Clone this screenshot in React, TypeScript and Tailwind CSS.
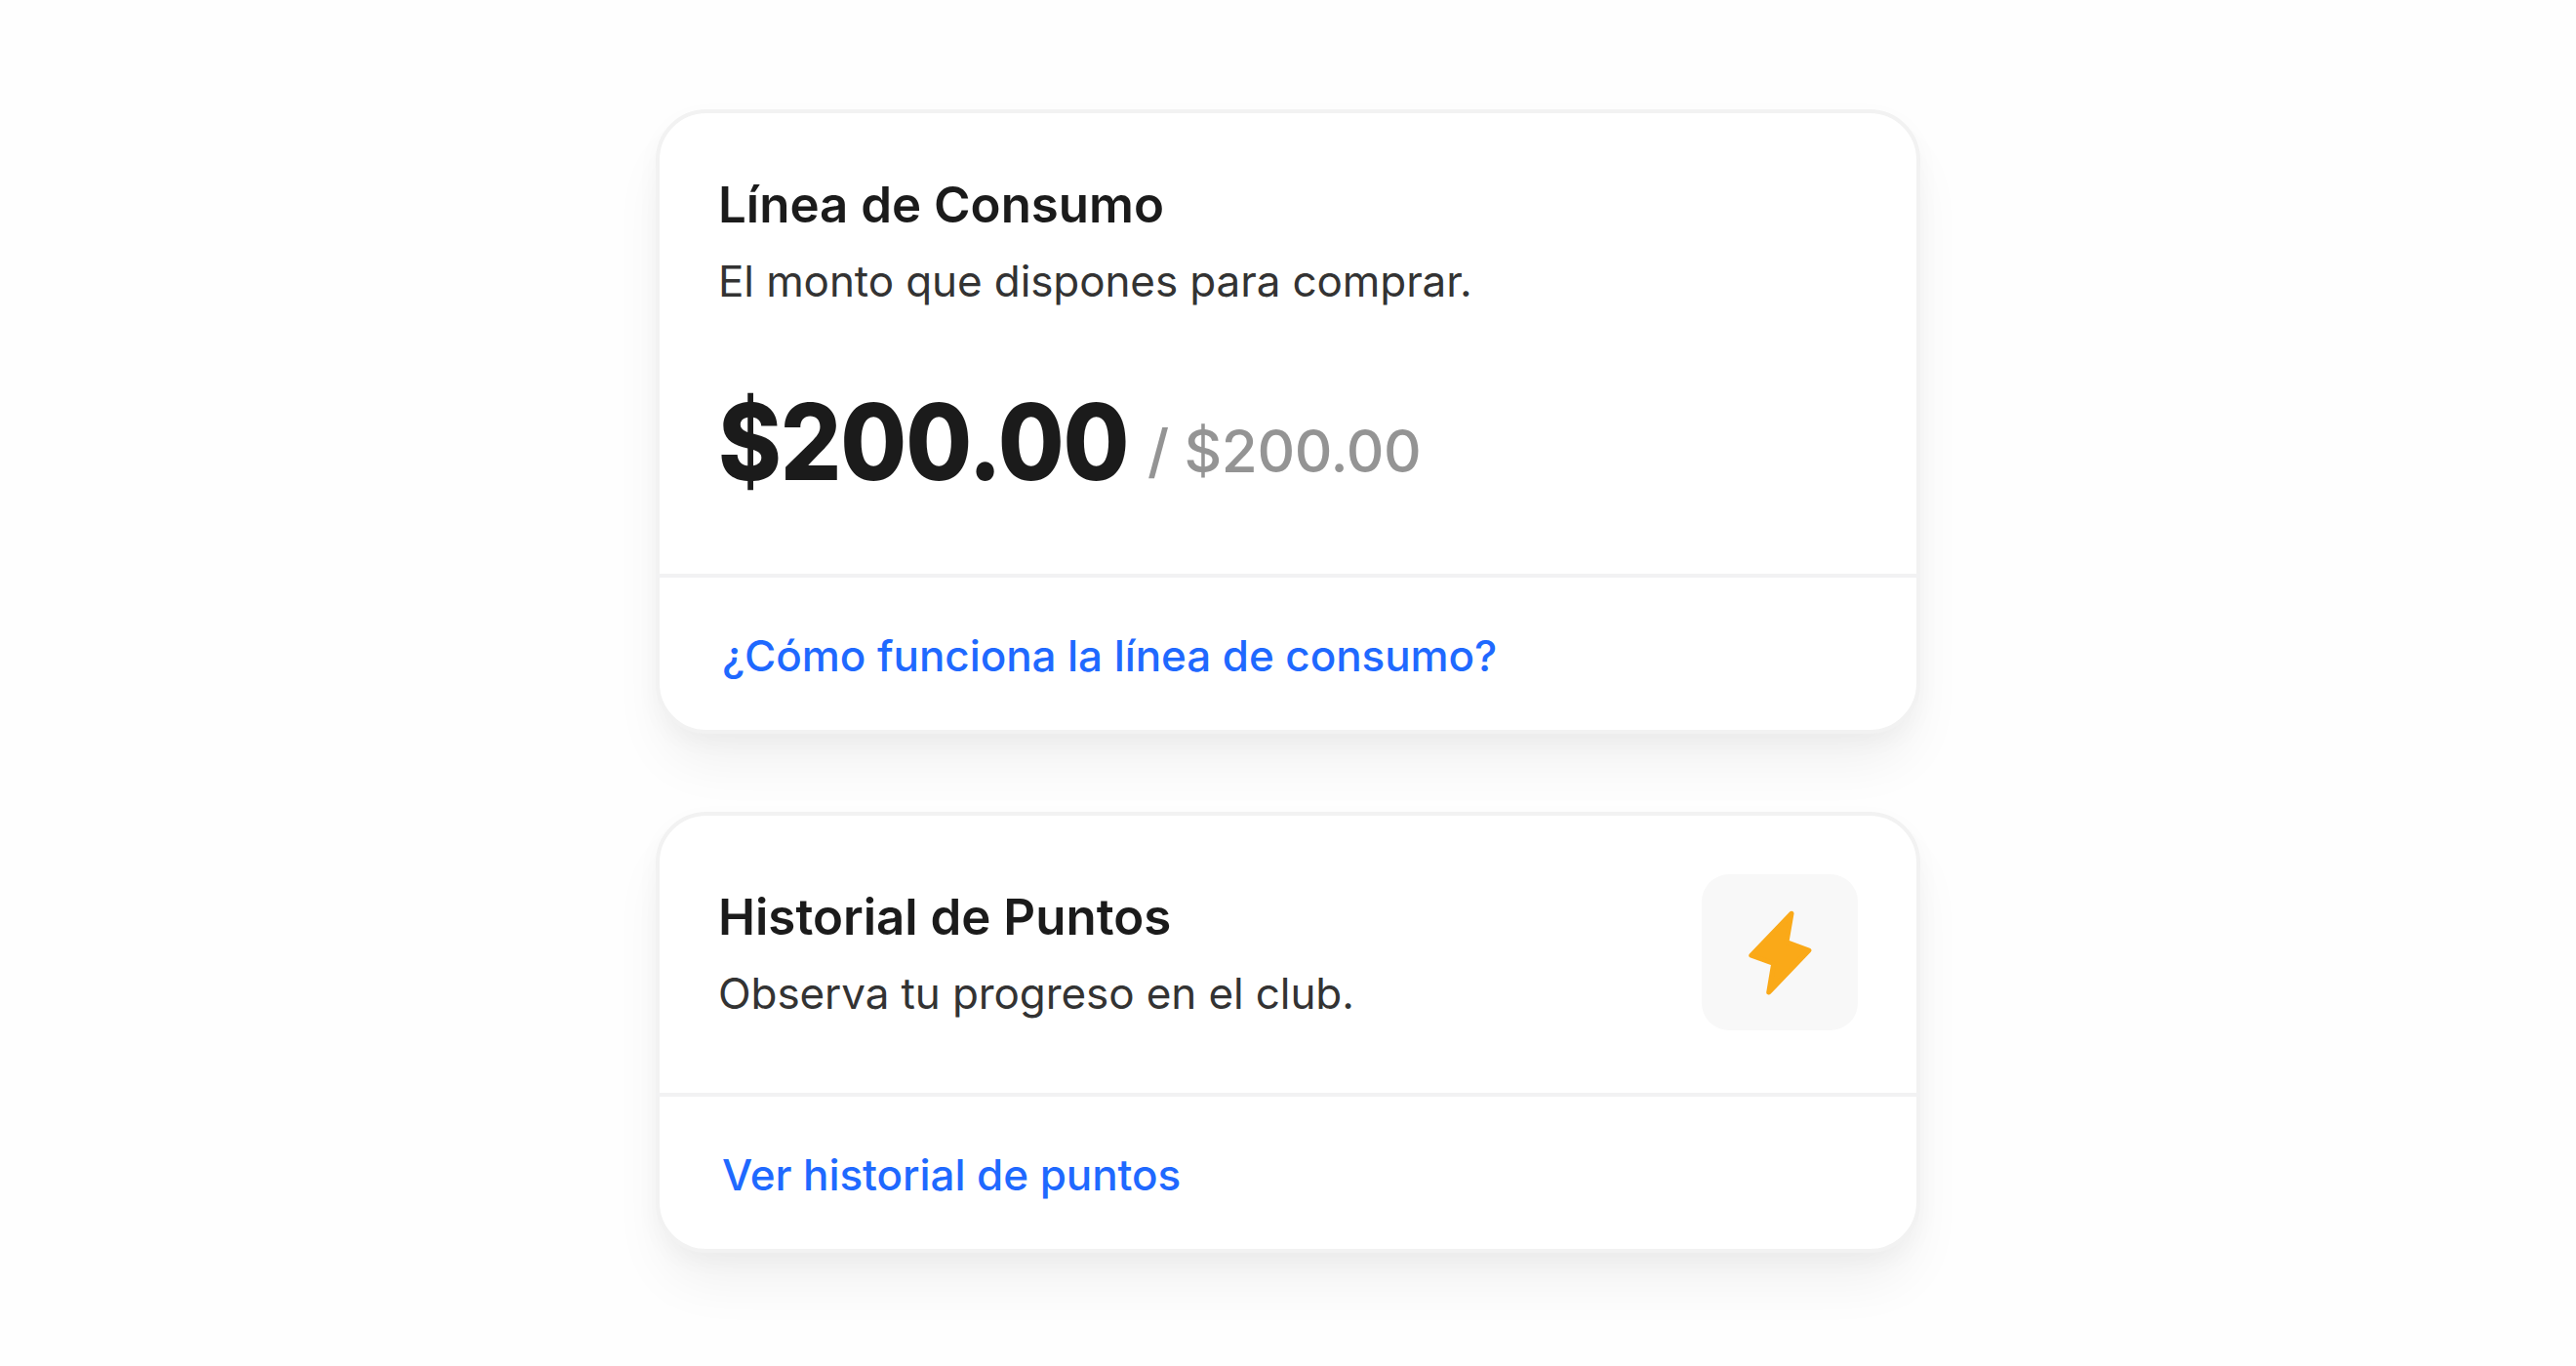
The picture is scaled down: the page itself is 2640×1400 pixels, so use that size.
import type { ReactNode } from "react";

function BoltIcon() {
  return (
    <svg width="65" height="87" viewBox="0 0 65 87" fill="#faa918" stroke="#faa918" strokeWidth="5" strokeLinejoin="round">
      <path d="M44 3.2 L2.8 46.2 L25.7 54.5 L20.7 84.1 L61.9 41 L38.9 32.7 Z" />
    </svg>
  );
}

function Card({ children, link }: { children: ReactNode; link: string }) {
  return (
    <section className="w-[1296px] rounded-[52px] border-4 border-[#f2f2f2] bg-white shadow-[0_8px_24px_rgba(0,0,0,0.03),0_36px_56px_-8px_rgba(0,0,0,0.06)]">
      {children}
      <div className="-mx-1 flex h-40 items-center border-t-4 border-[#f2f2f3] pl-[68px] pt-1">
        <a href="#" className="text-[44px] font-medium leading-[60px] tracking-[-0.08px] text-[#1f69ff]">{link}</a>
      </div>
    </section>
  );
}

function Heading({ title, text }: { title: string; text: string }) {
  return (
    <div>
      <h2 className="text-[51px] font-semibold leading-[60px] text-[#1b1b1b]">{title}</h2>
      <p className="mt-[18px] text-[44px] leading-[60px] tracking-[-0.1px] text-[#333]">{text}</p>
    </div>
  );
}

export default function App() {
  return (
    <main className="flex h-[1400px] flex-col items-center gap-20 overflow-hidden bg-[#fefefe] pt-28 font-['Inter',sans-serif]">
      <Card link="¿Cómo funciona la línea de consumo?">
        <div className="h-[472px] px-[60px] pt-16">
          <Heading title="Línea de Consumo" text="El monto que dispones para comprar." />
          <div className="mt-[70px] flex items-end">
            <span className="origin-left scale-x-[0.91] text-[108px] font-extrabold leading-[130px] tracking-[-1.2px] text-[#1b1b1b]">$200.00</span>
            <span className="-ml-[22px] text-[60px] font-medium leading-[112px] tracking-[-0.4px] text-[#949494]">/ $200.00</span>
          </div>
        </div>
      </Card>
      <Card link="Ver historial de puntos">
        <div className="flex h-[284px] items-start justify-between px-[60px] pt-[60px]">
          <div className="pt-[14px]">
            <Heading title="Historial de Puntos" text="Observa tu progreso en el club." />
          </div>
          <div className="flex size-40 items-center justify-center rounded-[28px] bg-[#f8f8f8]">
            <BoltIcon />
          </div>
        </div>
      </Card>
    </main>
  );
}
